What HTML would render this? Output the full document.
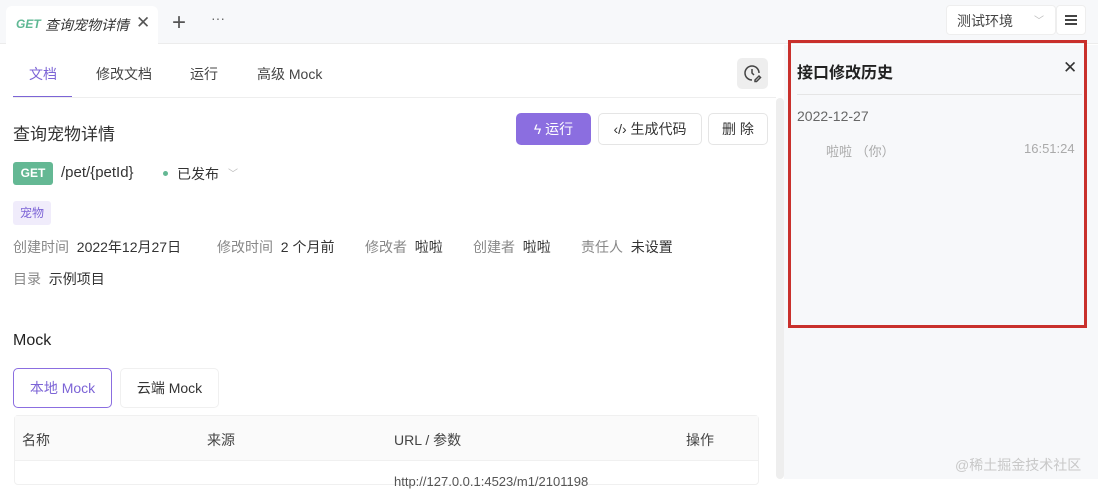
<!DOCTYPE html>
<html><head><meta charset="utf-8"><style>
*{margin:0;padding:0;box-sizing:border-box}
body{width:1098px;height:479px;overflow:hidden;background:#fff;font-family:"Liberation Sans","Noto Sans CJK SC",sans-serif;color:#333;position:relative;font-size:14px}
.a{position:absolute;white-space:nowrap}
.g{color:#888}
.btn{position:absolute;border:1px solid #e5e5e5;border-radius:5px;background:#fff;display:flex;align-items:center;justify-content:center;font-size:14px}
</style></head><body>
<div class="a" style="left:0;top:0;width:1098px;height:44px;background:#f7f8fa;border-bottom:1px solid #ececec"></div>
<div class="a" style="left:6px;top:6px;width:152px;height:39px;background:#fff;border-radius:6px 6px 0 0"></div>
<div class="a" style="left:16px;top:17px;font-size:12px;font-weight:bold;font-style:italic;color:#5fb894">GET</div>
<div class="a" style="left:45px;top:15px;font-size:14px;font-style:italic;color:#333">查询宠物详情</div>
<div class="a" style="left:136px;top:13px;font-size:17px;color:#555">✕</div>
<div class="a" style="left:172px;top:9px;font-size:24px;color:#555;font-weight:300">+</div>
<div class="a" style="left:211px;top:10px;font-size:14px;color:#666">···</div>
<div class="a" style="left:946px;top:5px;width:110px;height:30px;background:#fff;border:1px solid #eee;border-radius:4px"></div>
<div class="a" style="left:957px;top:11px;font-size:14px;color:#444">测试环境</div>
<div class="a" style="left:1034px;top:12px;font-size:10px;color:#bbb">﹀</div>
<div class="a" style="left:1056px;top:5px;width:30px;height:30px;background:#fff;border:1px solid #eee;border-radius:4px"></div>
<div class="a" style="left:1065px;top:15px;width:12px;height:2px;background:#444;box-shadow:0 4px 0 #444,0 8px 0 #444"></div>
<div class="a" style="left:784px;top:45px;width:314px;height:434px;background:#f7f8fa"></div>
<div class="a" style="left:776px;top:98px;width:8px;height:381px;background:#eee;border-radius:4px"></div>
<div class="a" style="left:788px;top:40px;width:299px;height:288px;border:3px solid #c9302c"></div>
<div class="a" style="left:797px;top:59px;font-size:16px;font-weight:bold;color:#222">接口修改历史</div>
<div class="a" style="left:1063px;top:58px;font-size:17px;color:#333">✕</div>
<div class="a" style="left:797px;top:94px;width:285px;height:1px;background:#e5e5e5"></div>
<div class="a" style="left:797px;top:108px;font-size:14px;color:#666">2022-12-27</div>
<div class="a" style="left:826px;top:141px;font-size:13px;color:#aaa">啦啦 （你）</div>
<div class="a" style="left:1024px;top:141px;font-size:13px;color:#aaa">16:51:24</div>
<div class="a" style="left:29px;top:64px;color:#7c64d6;font-size:14px">文档</div>
<div class="a" style="left:96px;top:64px;color:#444">修改文档</div>
<div class="a" style="left:190px;top:64px;color:#444">运行</div>
<div class="a" style="left:257px;top:64px;color:#444">高级 Mock</div>
<div class="a" style="left:13px;top:96px;width:59px;height:2px;background:#7c64d6"></div>
<div class="a" style="left:13px;top:97px;width:763px;height:1px;background:#eee"></div>
<div class="a" style="left:737px;top:58px;width:31px;height:31px;background:#eee;border-radius:5px"></div>
<svg class="a" style="left:743px;top:64px" width="20" height="20" viewBox="0 0 20 20" fill="none" stroke="#444" stroke-width="1.5"><path d="M16 9A7 7 0 1 0 9 16"/><path d="M9 5v4l2 2"/><path d="M12 16l4-4 1.5 1.5-4 4H12z"/></svg>
<div class="a" style="left:13px;top:120px;font-size:17px;color:#333">查询宠物详情</div>
<div class="btn" style="left:516px;top:113px;width:75px;height:32px;background:#8b6ee0;border-color:#8b6ee0;color:#fff">ϟ 运行</div>
<div class="btn" style="left:598px;top:113px;width:104px;height:32px">‹/› 生成代码</div>
<div class="btn" style="left:708px;top:113px;width:60px;height:32px">删 除</div>
<div class="a" style="left:13px;top:162px;width:40px;height:23px;background:#64b894;border-radius:3px;color:#fff;font-size:12px;font-weight:bold;text-align:center;line-height:23px">GET</div>
<div class="a" style="left:61px;top:164px;font-size:15px;color:#333">/pet/{petId}</div>
<div class="a" style="left:163px;top:171px;width:5px;height:5px;border-radius:50%;background:#64b894"></div>
<div class="a" style="left:177px;top:164px;font-size:14px;color:#333">已发布</div>
<div class="a" style="left:228px;top:165px;font-size:10px;color:#bbb">﹀</div>
<div class="a" style="left:13px;top:201px;width:38px;height:24px;background:#f0ecfb;border-radius:3px;color:#7c64d6;font-size:12px;text-align:center;line-height:24px">宠物</div>
<div class="a" style="left:13px;top:237px;font-size:14px"><span class="g">创建时间</span>&nbsp; 2022年12月27日</div>
<div class="a" style="left:217px;top:237px"><span class="g">修改时间</span>&nbsp; 2 个月前</div>
<div class="a" style="left:365px;top:237px"><span class="g">修改者</span>&nbsp; 啦啦</div>
<div class="a" style="left:473px;top:237px"><span class="g">创建者</span>&nbsp; 啦啦</div>
<div class="a" style="left:581px;top:237px"><span class="g">责任人</span>&nbsp; 未设置</div>
<div class="a" style="left:13px;top:269px"><span class="g">目录</span>&nbsp; 示例项目</div>
<div class="a" style="left:13px;top:332px;font-size:16px;color:#222">Mock</div>
<div class="btn" style="left:13px;top:368px;width:99px;height:40px;border-color:#8b6ee0;color:#7c64d6">本地 Mock</div>
<div class="btn" style="left:120px;top:368px;width:99px;height:40px;border-color:#f0f0f0;color:#333">云端 Mock</div>
<div class="a" style="left:14px;top:415px;width:745px;height:70px;border:1px solid #f0f0f0;border-radius:4px"></div>
<div class="a" style="left:15px;top:416px;width:743px;height:45px;background:#fafafa;border-bottom:1px solid #f0f0f0"></div>
<div class="a" style="left:22px;top:430px;color:#444">名称</div>
<div class="a" style="left:207px;top:430px;color:#444">来源</div>
<div class="a" style="left:394px;top:430px;color:#444">URL / 参数</div>
<div class="a" style="left:686px;top:430px;color:#444">操作</div>
<div class="a" style="left:394px;top:474px;color:#555;font-size:13px">http://127.0.0.1:4523/m1/2101198</div>
<div class="a" style="left:955px;top:455px;color:#c8c8c8;font-size:14px">@稀土掘金技术社区</div>
</body></html>
